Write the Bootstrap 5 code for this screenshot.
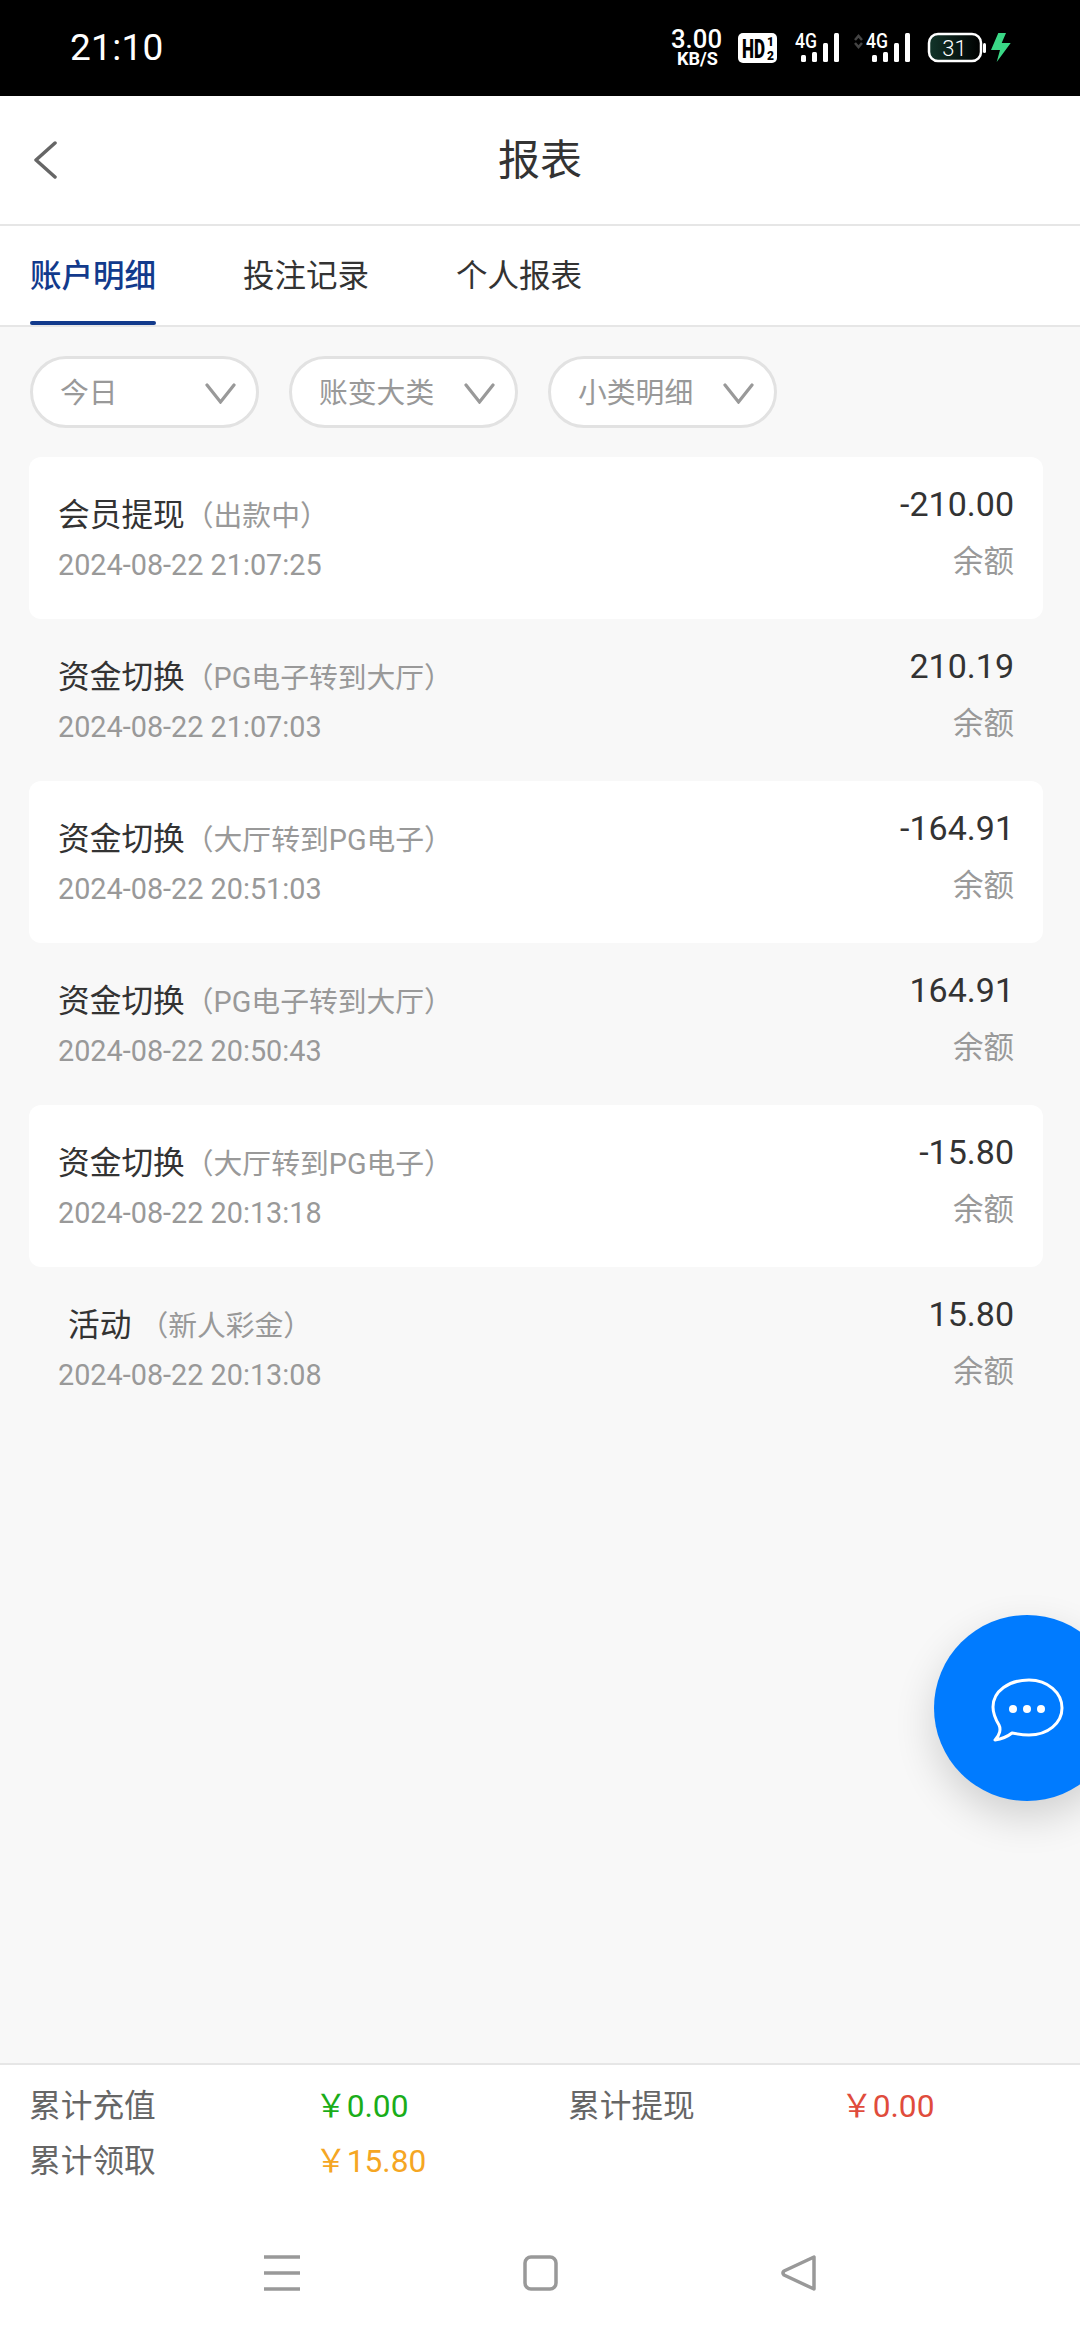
<!DOCTYPE html>
<html lang="zh">
<head>
<meta charset="utf-8">
<title>报表</title>
<link href="https://cdn.jsdelivr.net/npm/bootstrap@5.3.0/dist/css/bootstrap.min.css" rel="stylesheet">
<style>
html,body{margin:0;height:2340px;width:1080px;overflow:hidden}
body{font-family:Roboto,"Noto Sans CJK SC",sans-serif;background:#f8f8f8;color:#333}
.shell{width:1080px;height:2340px;overflow:hidden}
.statusbar{height:96px;background:#000;color:#fff;padding:0 65px 0 70px}
.clock{font-size:37px;line-height:1;letter-spacing:.3px;margin-top:-1px}
.status-ico{display:block}
.topbar{height:130px;background:#fff;border-bottom:2px solid #e6e6e6;display:grid;grid-template-columns:1fr auto 1fr;align-items:center;padding:2px 33px 0}
.back-ico{margin-top:-2px}
.topbar-title{font-size:42px;line-height:1;color:#333;margin:0;font-weight:400}
.tabbar{height:101px;background:#fff;border-bottom:2px solid #e6e6e6;padding:0 30px;gap:87px}
.tab-item{position:relative;font-size:31.5px;line-height:1;color:#333;padding:35px 0 0;height:99px;width:126px;text-decoration:none;white-space:nowrap}
.tab-item.current{color:#123a8c;font-weight:500}
.tab-item.current::after{content:"";position:absolute;left:0;right:0;bottom:0;height:4px;border-radius:2px;background:#123a8c}
.filters{padding:29px 30px 0;gap:30px}
.filter-pill{width:229px;height:72px;border:3px solid #e2e2e2;border-radius:36px;background:#fff;padding:3px 20px 0 27px;color:#999;font-size:28.8px;line-height:1}
.ledger{padding:29px 37px 0 29px}
.entry{height:162px;padding:0 29px;border-radius:12px}
.entry.lit{background:#fff}
.entry-title{font-size:31.7px;line-height:40px;margin-top:39px;white-space:nowrap}
.entry-sub{font-size:28.8px;color:#999}
.entry-offset{margin:0 8px 0 10px}
.entry-date{font-size:28.8px;line-height:40px;margin-top:9px;color:#999}
.entry-amount{font-size:34px;line-height:40px;margin-top:27px;color:#333;text-align:right}
.entry-balance{font-size:30.5px;line-height:40px;margin-top:18px;color:#999;text-align:right}
.fab{position:absolute;left:934px;top:1615px;width:186px;height:186px;border-radius:50%;background:#007bff;box-shadow:0 16px 40px rgba(0,0,0,.16)}
.fab svg{position:absolute;left:56px;top:62px}
.summary{height:277px;background:#fff;border-top:2px solid #e6e6e6;position:relative}
.totals{display:grid;grid-template-columns:286px 253px 273px auto;padding:22px 29px 0;row-gap:15px;font-size:31.7px;line-height:40px}
.totals-label{color:#666}
.v-green{color:#1aad19}.v-red{color:#e04c3c}.v-orange{color:#f5a623}
.sysnav{height:40px;margin-top:71px;padding:0 0 0 264px;gap:223px}
.main-fill{flex:1 1 auto}
</style>
</head>
<body>
<div class="shell d-flex flex-column">
  <div class="statusbar d-flex align-items-center justify-content-between">
    <div class="clock">21:10</div>
    <svg class="status-ico" width="345" height="60" viewBox="0 -10 345 60" fill="#fff" font-family="Roboto,sans-serif">
      <defs><linearGradient id="batfill" x1="0" x2="1" y1="0" y2="0"><stop offset="0" stop-color="#12352a"/><stop offset="1" stop-color="#000"/></linearGradient></defs>
      <text x="1" y="20" font-size="26" font-weight="500" textLength="51" lengthAdjust="spacingAndGlyphs">3.00</text>
      <text x="7" y="37" font-size="18" font-weight="700" textLength="41" lengthAdjust="spacingAndGlyphs">KB/S</text>
      <rect x="68" y="5" width="39" height="30" rx="5"/>
      <text x="72" y="30" font-size="25" font-weight="900" fill="#000" textLength="23" lengthAdjust="spacingAndGlyphs">HD</text>
      <text x="97" y="18" font-size="12" font-weight="900" fill="#000">1</text>
      <text x="97" y="32" font-size="12" font-weight="900" fill="#000">2</text>
      <text x="125" y="20" font-size="20" font-weight="500" textLength="22" lengthAdjust="spacingAndGlyphs">4G</text>
      <rect x="131" y="27" width="5" height="7" rx="1.500"/><rect x="142" y="24" width="5" height="10" rx="1.500"/><rect x="153" y="15" width="5" height="19" rx="1.500"/><rect x="164" y="5" width="5" height="29" rx="1.500"/>
      <path d="M185 12l3.500-4 3.500 4M185 15l3.500 4 3.500-4" fill="none" stroke="#444" stroke-width="2.500"/>
      <text x="196" y="20" font-size="20" font-weight="500" textLength="22" lengthAdjust="spacingAndGlyphs">4G</text>
      <rect x="202" y="27" width="5" height="7" rx="1.500"/><rect x="213" y="24" width="5" height="10" rx="1.500"/><rect x="224" y="15" width="5" height="19" rx="1.500"/><rect x="235" y="5" width="5" height="29" rx="1.500"/>
      <rect x="259" y="6" width="52" height="27" rx="9" fill="url(#batfill)" stroke="#fff" stroke-width="2.500"/>
      <rect x="313" y="15" width="3" height="10" rx="1.500"/>
      <text x="284.500" y="28" font-size="22" font-weight="300" text-anchor="middle">31</text>
      <path d="M328.300 5H336l-4.300 10h9l-14 19 3.300-12h-9z" fill="#3ad886"/>
    </svg>
  </div>
  <div class="topbar">
    <svg class="back-ico" width="24" height="38" viewBox="0 0 24 38"><path d="M22 2 3 19l19 17" fill="none" stroke="#666" stroke-width="3.500" stroke-linecap="round" stroke-linejoin="round"/></svg>
    <h1 class="topbar-title">报表</h1>
    <span></span>
  </div>
  <nav class="tabbar d-flex">
    <a class="tab-item current" href="#">账户明细</a>
    <a class="tab-item" href="#">投注记录</a>
    <a class="tab-item" href="#">个人报表</a>
  </nav>
  <div class="filters d-flex">
    <div class="filter-pill d-flex align-items-center justify-content-between"><span>今日</span><svg width="31" height="21" viewBox="0 0 31 21"><path d="M2 2l13.500 17L29 2" fill="none" stroke="#999" stroke-width="3.200" stroke-linecap="round"/></svg></div>
    <div class="filter-pill d-flex align-items-center justify-content-between"><span>账变大类</span><svg width="31" height="21" viewBox="0 0 31 21"><path d="M2 2l13.500 17L29 2" fill="none" stroke="#999" stroke-width="3.200" stroke-linecap="round"/></svg></div>
    <div class="filter-pill d-flex align-items-center justify-content-between"><span>小类明细</span><svg width="31" height="21" viewBox="0 0 31 21"><path d="M2 2l13.500 17L29 2" fill="none" stroke="#999" stroke-width="3.200" stroke-linecap="round"/></svg></div>
  </div>
  <div class="ledger main-fill">
    <div class="entry lit d-flex justify-content-between">
      <div><div class="entry-title">会员提现<span class="entry-sub">（出款中）</span></div><div class="entry-date">2024-08-22 21:07:25</div></div>
      <div><div class="entry-amount">-210.00</div><div class="entry-balance">余额</div></div>
    </div>
    <div class="entry d-flex justify-content-between">
      <div><div class="entry-title">资金切换<span class="entry-sub">（PG电子转到大厅）</span></div><div class="entry-date">2024-08-22 21:07:03</div></div>
      <div><div class="entry-amount">210.19</div><div class="entry-balance">余额</div></div>
    </div>
    <div class="entry lit d-flex justify-content-between">
      <div><div class="entry-title">资金切换<span class="entry-sub">（大厅转到PG电子）</span></div><div class="entry-date">2024-08-22 20:51:03</div></div>
      <div><div class="entry-amount">-164.91</div><div class="entry-balance">余额</div></div>
    </div>
    <div class="entry d-flex justify-content-between">
      <div><div class="entry-title">资金切换<span class="entry-sub">（PG电子转到大厅）</span></div><div class="entry-date">2024-08-22 20:50:43</div></div>
      <div><div class="entry-amount">164.91</div><div class="entry-balance">余额</div></div>
    </div>
    <div class="entry lit d-flex justify-content-between">
      <div><div class="entry-title">资金切换<span class="entry-sub">（大厅转到PG电子）</span></div><div class="entry-date">2024-08-22 20:13:18</div></div>
      <div><div class="entry-amount">-15.80</div><div class="entry-balance">余额</div></div>
    </div>
    <div class="entry d-flex justify-content-between">
      <div><div class="entry-title"><span class="entry-offset">活动</span><span class="entry-sub">（新人彩金）</span></div><div class="entry-date">2024-08-22 20:13:08</div></div>
      <div><div class="entry-amount">15.80</div><div class="entry-balance">余额</div></div>
    </div>
  </div>
  <div class="summary">
    <div class="totals">
      <div class="totals-label">累计充值</div><div class="v-green">￥0.00</div><div class="totals-label">累计提现</div><div class="v-red">￥0.00</div>
      <div class="totals-label">累计领取</div><div class="v-orange">￥15.80</div>
    </div>
    <div class="sysnav d-flex align-items-center">
      <svg width="36" height="36" viewBox="0 0 36 36"><path d="M0 2h36M0 18h36M0 34h36" stroke="#999" stroke-width="3.500"/></svg>
      <svg width="35" height="36" viewBox="0 0 35 36"><rect x="2" y="2" width="31" height="32" rx="6" fill="none" stroke="#999" stroke-width="3.500"/></svg>
      <svg width="36" height="36" viewBox="0 0 36 36"><path d="M33 2v32L3 20q-2-2 0-4z" fill="none" stroke="#999" stroke-width="3.500" stroke-linejoin="round"/></svg>
    </div>
  </div>
</div>
<div class="fab">
  <svg width="76" height="70" viewBox="0 0 76 70"><path d="M39 3C19 3 3 14 3 30c0 8 3 13 6 18 2 4 1 10-4 15 7-1 12-3 17-7 5 1 11 2 17 2 19 0 33-12 33-27S58 3 39 3z" fill="none" stroke="#fff" stroke-width="3" stroke-linejoin="round"/><circle cx="23" cy="32" r="4" fill="#fff"/><circle cx="37" cy="32" r="4" fill="#fff"/><circle cx="51" cy="32" r="4" fill="#fff"/></svg>
</div>
<script src="https://cdn.jsdelivr.net/npm/bootstrap@5.3.0/dist/js/bootstrap.bundle.min.js"></script>
</body>
</html>
